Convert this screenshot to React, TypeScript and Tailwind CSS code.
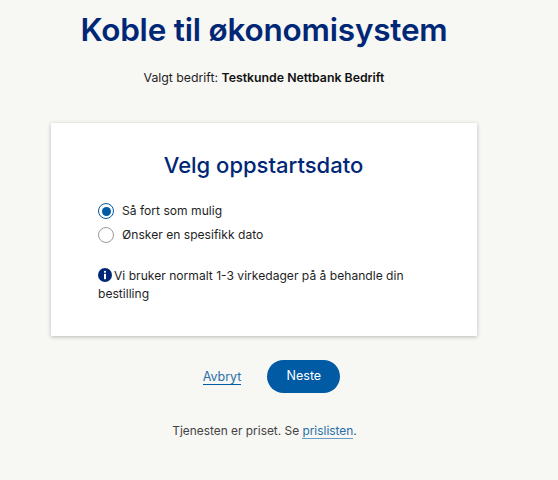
export default function App() {
  return (
    <div className="min-h-[480px] w-[558px] overflow-hidden bg-[#f7f7f4] font-['Inter',sans-serif] text-[#1f1f1f]">
      <div className="flex w-[528px] flex-col items-center">
        <h1 className="mt-[7px] h-[46px] whitespace-nowrap text-[31.5px] font-semibold leading-[46px] tracking-[-0.2px] text-[#002776]">
          Koble til økonomisystem
        </h1>
        <p className="mt-[16px] text-[12.3px] leading-[18px]">
          Valgt bedrift: <strong className="font-semibold text-[#111]">Testkunde Nettbank Bedrift</strong>
        </p>

        <div className="mt-[36px] h-[213px] w-[426px] bg-white pl-[47px] pr-[48px] pt-[27px] shadow-[0_1px_4px_rgba(0,0,0,0.25)]">
          <h2 className="text-center text-[22px] font-medium leading-[30px] text-[#002776]">
            Velg oppstartsdato
          </h2>
          <div className="mt-[23px] flex flex-col gap-[8px]">
            <label className="flex h-[16px] items-center gap-[8px] text-[12.1px]">
              <span className="flex h-[16px] w-[16px] items-center justify-center rounded-full border-[1.5px] border-[#005aa4]">
                <span className="h-[9px] w-[9px] rounded-full bg-[#005aa4]" />
              </span>
              Så fort som mulig
            </label>
            <label className="flex h-[16px] items-center gap-[8px] text-[12.1px]">
              <span className="h-[16px] w-[16px] rounded-full border-[1.5px] border-[#9a9a9a]" />
              Ønsker en spesifikk dato
            </label>
          </div>
          <p className="mt-[24px] text-[12.1px] leading-[18px]">
            <svg viewBox="0 0 14 14" className="mr-[2px] inline-block h-[14px] w-[14px] align-[-2px]">
              <circle cx="7" cy="7" r="7" fill="#002776" />
              <circle cx="7" cy="3.8" r="1.1" fill="#fff" />
              <rect x="6" y="5.8" width="2" height="5.4" fill="#fff" />
            </svg>
            Vi bruker normalt 1-3 virkedager på å behandle din bestilling
          </p>
        </div>

        <div className="ml-[15px] mt-[24px] flex items-center gap-[26px]">
          <a className="border-b border-[#005aa4] text-[12.5px] leading-[15px] text-[#2a6ea8]">Avbryt</a>
          <button className="h-[33px] w-[73px] rounded-full bg-[#005aa4] text-[12.5px] font-normal text-white">
            Neste
          </button>
        </div>

        <p className="ml-[1px] mt-[29px] text-[11.9px] leading-[18px] text-[#444]">
          Tjenesten er priset. Se <a className="border-b border-[#6a9cc6] text-[#2a6ea8]">prislisten</a>.
        </p>
      </div>
    </div>
  );
}
